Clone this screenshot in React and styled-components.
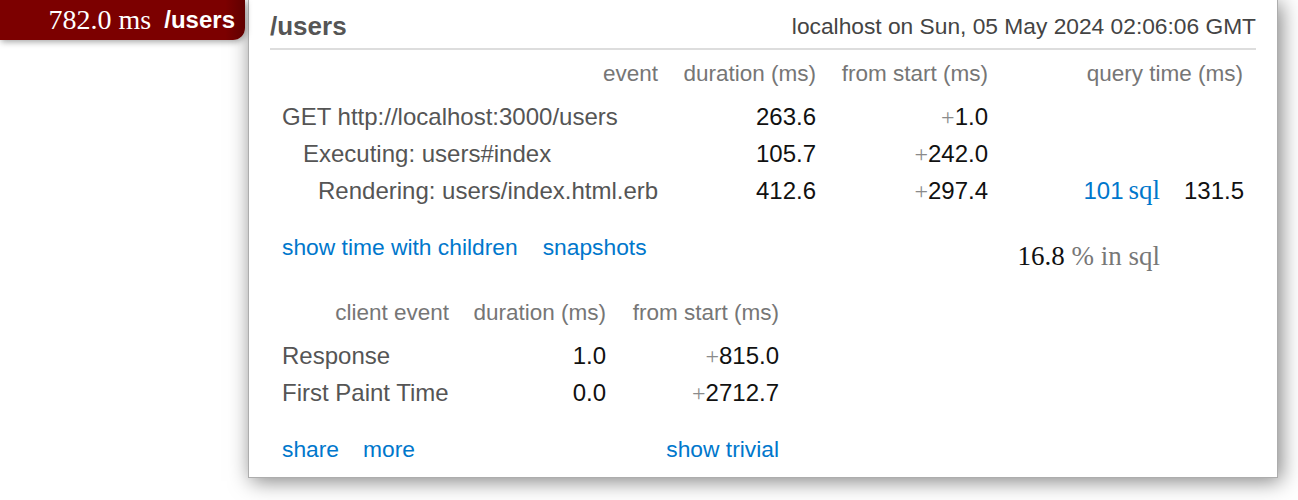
import React from "react";
import styled, { createGlobalStyle } from "styled-components";

const GlobalStyle = createGlobalStyle`
  html, body {
    margin: 0;
    padding: 0;
    background: #fff;
  }
  body {
    font-family: "Liberation Sans", Arial, Helvetica, sans-serif;
  }
`;

const serif = `"Liberation Serif", "Times New Roman", serif`;

const Page = styled.div`
  display: flex;
  align-items: flex-start;
  width: 1298px;
  height: 500px;
  overflow: hidden;
`;

const Badge = styled.div`
  flex: none;
  width: 245px;
  height: 40px;
  box-sizing: border-box;
  padding-right: 10px;
  display: flex;
  align-items: center;
  justify-content: flex-end;
  gap: 13px;
  background: linear-gradient(to right, #7c0000 0%, #7c0000 92%, #600000 100%);
  border-radius: 0 0 12px 0;
  box-shadow: 1px 2px 6px rgba(0, 0, 0, 0.35);
  color: #fff;
  white-space: nowrap;
  position: relative;
  z-index: 2;
`;

const BadgeTime = styled.span`
  font-family: ${serif};
  font-size: 28px;
`;

const BadgeName = styled.span`
  font-weight: bold;
  font-size: 24px;
`;

const Panel = styled.div`
  flex: none;
  margin-left: 3px;
  width: 1030px;
  box-sizing: border-box;
  border: 1px solid #adadad;
  border-top: none;
  background: #fff;
  box-shadow: 3px 3px 20px rgba(0, 0, 0, 0.5);
  padding: 0 21px 14px 21px;
`;

const Header = styled.div`
  display: flex;
  justify-content: space-between;
  align-items: center;
  height: 50px;
  box-sizing: border-box;
  padding-top: 4px;
  border-bottom: 2px solid #ddd;
`;

const Title = styled.h1`
  margin: 0;
  font-size: 26px;
  font-weight: bold;
  color: #555;
`;

const Stamp = styled.div`
  font-size: 22.75px;
  color: #444;
`;

const Timings = styled.table`
  width: ${(p) => p.$width}px;
  margin-top: ${(p) => p.$top}px;
  table-layout: fixed;
  border-collapse: collapse;
  border-spacing: 0;
`;

const Th = styled.th`
  height: ${(p) => p.$h}px;
  padding: 0 12px 2px 12px;
  font-size: 22.5px;
  font-weight: normal;
  color: #767676;
  text-align: right;
  vertical-align: middle;
  white-space: nowrap;
`;

const Name = styled.td`
  height: 37px;
  padding: 0 12px 0 ${(p) => 12 + (p.$indent || 0)}px;
  font-size: 24px;
  line-height: 28px;
  color: #555;
  white-space: nowrap;
`;

const Num = styled.td`
  height: 37px;
  padding: 0 12px;
  font-size: 24px;
  line-height: 28px;
  color: #111;
  text-align: right;
  white-space: nowrap;
`;

const Plus = styled.span`
  font-family: ${serif};
  color: #8a8a8a;
`;

const Link = styled.a`
  color: #0077cc;
  text-decoration: none;
  cursor: pointer;
  margin-right: ${(p) => p.$gap || 0}px;
`;

const SqlLink = styled(Link)`
  font-size: 24px;
`;

const SqlUnit = styled.span`
  font-family: ${serif};
  font-size: 27px;
  margin-left: 5px;
`;

const FootCell = styled.td`
  padding: ${(p) => p.$pt}px 12px 0 12px;
  font-size: 22.8px;
  line-height: 28px;
  vertical-align: top;
  text-align: ${(p) => (p.$right ? "right" : "left")};
  white-space: nowrap;
`;

const Percent = styled.td`
  padding: 31px 12px 0 12px;
  font-family: ${serif};
  font-size: 27px;
  line-height: 32px;
  color: #111;
  text-align: right;
  vertical-align: top;
  white-space: nowrap;
`;

const Muted = styled.span`
  color: #777;
`;

const serverRows = [
  { name: "GET http://localhost:3000/users", indent: 0, dur: "263.6", start: "1.0" },
  { name: "Executing: users#index", indent: 21, dur: "105.7", start: "242.0" },
  {
    name: "Rendering: users/index.html.erb",
    indent: 36,
    dur: "412.6",
    start: "297.4",
    sql: "101",
    sqlTime: "131.5",
  },
];

const clientRows = [
  { name: "Response", dur: "1.0", start: "815.0" },
  { name: "First Paint Time", dur: "0.0", start: "2712.7" },
];

export default function App() {
  return (
    <>
      <GlobalStyle />
      <Page>
        <Badge>
          <BadgeTime>782.0 ms</BadgeTime>
          <BadgeName>/users</BadgeName>
        </Badge>
        <Panel>
          <Header>
            <Title>/users</Title>
            <Stamp>localhost on Sun, 05 May 2024 02:06:06 GMT</Stamp>
          </Header>

          <Timings $width={985} $top={1}>
            <colgroup>
              <col style={{ width: 400 }} />
              <col style={{ width: 158 }} />
              <col style={{ width: 172 }} />
              <col style={{ width: 172 }} />
              <col style={{ width: 83 }} />
            </colgroup>
            <thead>
              <tr>
                <Th $h={45}>event</Th>
                <Th $h={45}>duration (ms)</Th>
                <Th $h={45}>from start (ms)</Th>
                <Th $h={45} colSpan={2}>query time (ms)</Th>
              </tr>
            </thead>
            <tbody>
              {serverRows.map((r) => (
                <tr key={r.name}>
                  <Name $indent={r.indent}>{r.name}</Name>
                  <Num>{r.dur}</Num>
                  <Num>
                    <Plus>+</Plus>
                    {r.start}
                  </Num>
                  <Num>
                    {r.sql && (
                      <SqlLink>
                        {r.sql}
                        <SqlUnit>sql</SqlUnit>
                      </SqlLink>
                    )}
                  </Num>
                  <Num>{r.sqlTime}</Num>
                </tr>
              ))}
            </tbody>
            <tfoot>
              <tr>
                <FootCell $pt={24} colSpan={3}>
                  <Link $gap={25}>show time with children</Link>
                  <Link>snapshots</Link>
                </FootCell>
                <Percent>
                  16.8 <Muted>% in sql</Muted>
                </Percent>
                <td />
              </tr>
            </tfoot>
          </Timings>

          <Timings $width={521} $top={19}>
            <colgroup>
              <col style={{ width: 191 }} />
              <col style={{ width: 157 }} />
              <col style={{ width: 173 }} />
            </colgroup>
            <thead>
              <tr>
                <Th $h={44}>client event</Th>
                <Th $h={44}>duration (ms)</Th>
                <Th $h={44}>from start (ms)</Th>
              </tr>
            </thead>
            <tbody>
              {clientRows.map((r) => (
                <tr key={r.name}>
                  <Name>{r.name}</Name>
                  <Num>{r.dur}</Num>
                  <Num>
                    <Plus>+</Plus>
                    {r.start}
                  </Num>
                </tr>
              ))}
            </tbody>
            <tfoot>
              <tr>
                <FootCell $pt={24} colSpan={2}>
                  <Link $gap={24}>share</Link>
                  <Link>more</Link>
                </FootCell>
                <FootCell $pt={24} $right>
                  <Link>show trivial</Link>
                </FootCell>
              </tr>
            </tfoot>
          </Timings>
        </Panel>
      </Page>
    </>
  );
}
